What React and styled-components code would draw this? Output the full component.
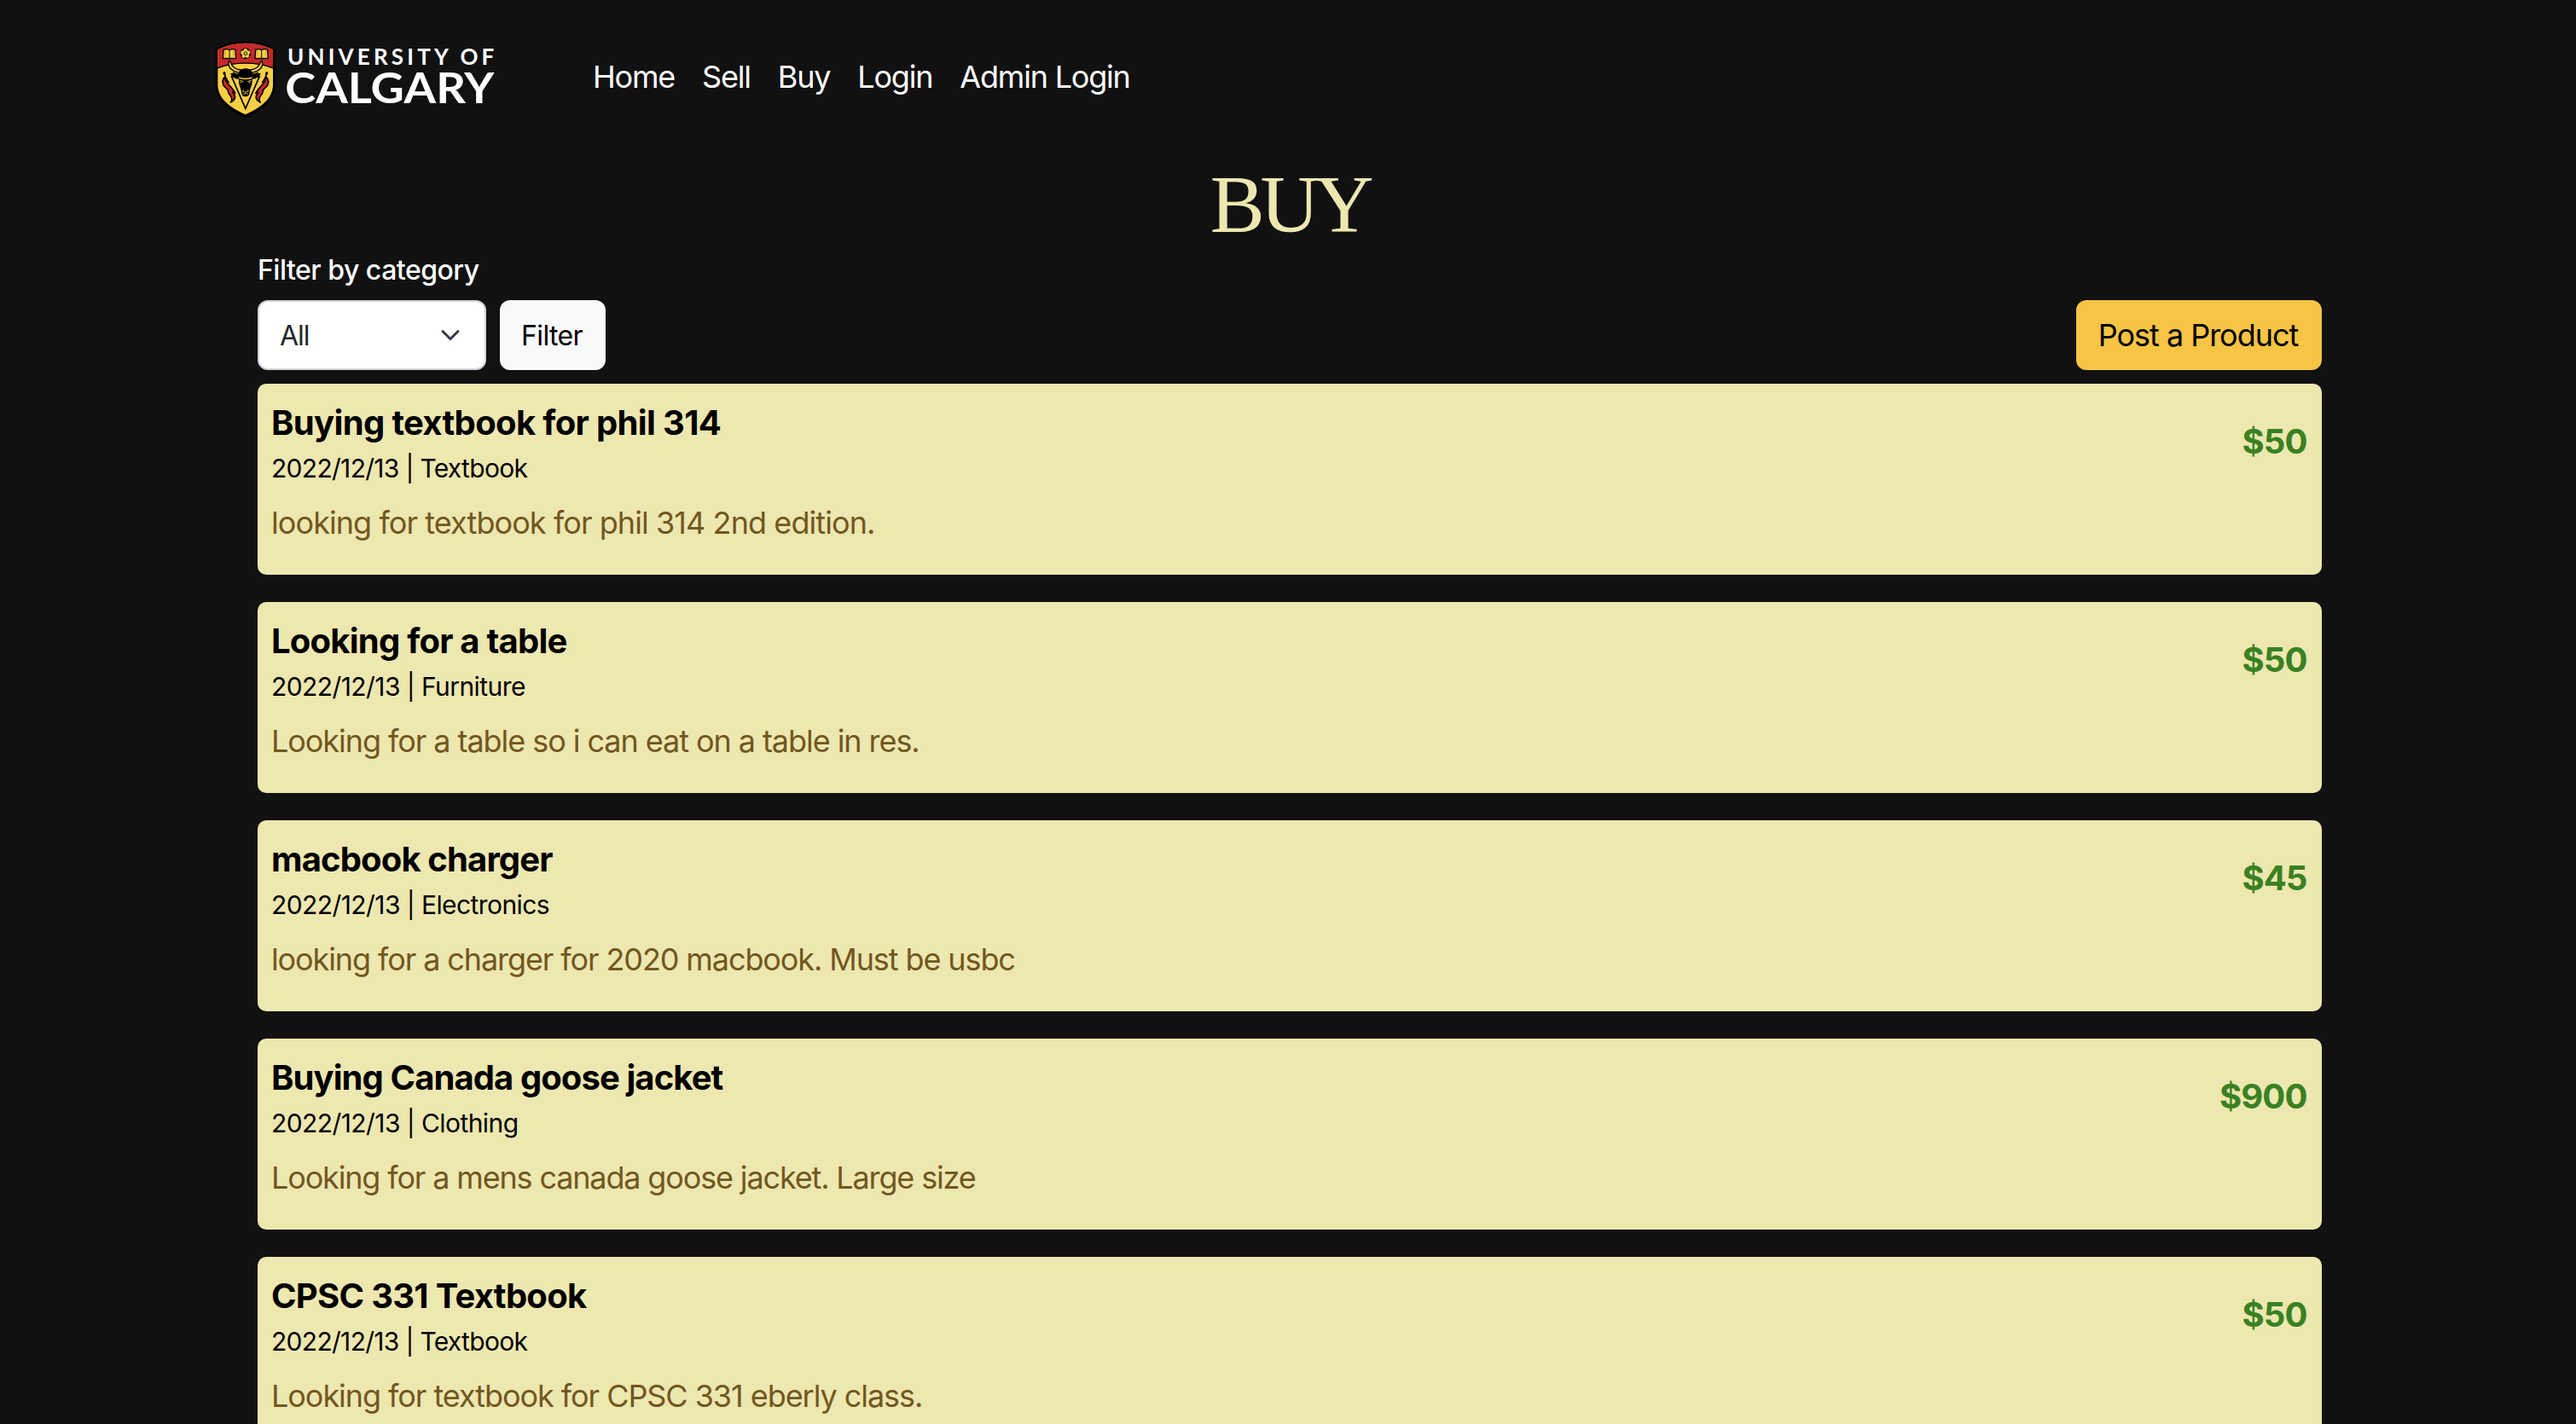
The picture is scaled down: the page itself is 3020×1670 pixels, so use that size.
import React from "react";
import styled, { createGlobalStyle } from "styled-components";

const GlobalStyle = createGlobalStyle`
  * { box-sizing: border-box; }
  body {
    margin: 0;
    background: #111111;
    font-family: Inter, "Liberation Sans", sans-serif;
  }
`;

const Page = styled.div`
  height: 1670px;
  overflow: hidden;
`;

const Header = styled.header`
  display: flex;
  align-items: center;
  gap: 110px;
  height: 180px;
  padding-left: 245px;
`;

const LogoArt = styled.svg`
  display: block;
  width: 340px;
  height: 100px;
`;

const Wordmark = styled.text`
  font-family: Lato, sans-serif;
  font-weight: 700;
  font-size: ${(p) => p.$size}px;
  fill: #ffffff;
`;

const Nav = styled.nav`
  display: flex;
  gap: 32px;
  padding-bottom: 1px;
`;

const NavLink = styled.a`
  font-size: 36px;
  line-height: 54px;
  letter-spacing: -1.2px;
  color: #ffffff;
  white-space: nowrap;
`;

const Main = styled.main`
  width: 2420px;
  margin: 8px 0 0 302px;
`;

const Title = styled.h1`
  margin: 0;
  font-family: "Liberation Serif", serif;
  font-weight: 400;
  font-size: 96px;
  line-height: 104px;
  letter-spacing: -5.4px;
  text-align: center;
  color: #ede7b0;
`;

const FilterLabel = styled.label`
  display: block;
  margin-bottom: 10px;
  font-size: 32px;
  font-weight: 500;
  line-height: 50px;
  letter-spacing: -0.5px;
  color: #ffffff;
`;

const Toolbar = styled.div`
  display: flex;
  gap: 16px;
  height: 82px;
  margin-bottom: 16px;
`;

const Select = styled.div`
  display: flex;
  align-items: center;
  justify-content: space-between;
  width: 268px;
  padding: 0 28px 0 24px;
  border: 2px solid #ced4da;
  border-radius: 12px;
  background: #ffffff;
  color: #212529;
  font-size: 32px;
  letter-spacing: -1px;
`;

const Chevron = styled.svg`
  width: 24px;
  height: 24px;
`;

const Button = styled.button`
  margin: 0 0 0 ${(p) => (p.$end ? "auto" : "0")};
  width: ${(p) => p.$width}px;
  padding: 0 2px 0 0;
  border: 0;
  border-radius: 12px;
  background: ${(p) => p.$bg};
  color: #000000;
  font-family: inherit;
  font-size: ${(p) => p.$size}px;
  letter-spacing: ${(p) => p.$track}px;
  white-space: nowrap;
`;

const List = styled.div`
  display: flex;
  flex-direction: column;
  gap: 32px;
`;

const Card = styled.article`
  display: flex;
  justify-content: space-between;
  height: 224px;
  padding: 22px 17.5px 0 16px;
  border-radius: 10px;
  background: #ede7b0;
  white-space: nowrap;
`;

const CardTitle = styled.h2`
  margin: 0 0 6px;
  font-size: 40px;
  font-weight: 700;
  line-height: 48px;
  letter-spacing: ${(p) => p.$track}px;
  color: #000000;
`;

const Meta = styled.p`
  margin: 0 0 14px;
  font-size: 30px;
  line-height: 46px;
  letter-spacing: ${(p) => p.$track}px;
  color: #000000;
`;

const Description = styled.p`
  margin: 0;
  font-size: 36px;
  line-height: 54px;
  letter-spacing: ${(p) => p.$track}px;
  color: #72571f;
`;

const Price = styled.strong`
  margin-top: 22px;
  font-size: 40px;
  font-weight: 700;
  line-height: 48px;
  letter-spacing: -0.9px;
  color: #398122;
`;

const Feather = () => (
  <g>
    <path
      d="M56 150 C46 160 47 171 51 180 C56 190 68 192 68 203 C68 211 75 214 78 221 C82 229 81 235 76 240 C88 234 93 226 91 217 C89 211 84 210 84 203 C88 204 90 206 92 208 C90 200 83 193 76 185 C67 175 56 166 56 150 Z"
      fill="#c6282b"
      stroke="#000"
      strokeWidth="5"
      strokeLinejoin="round"
    />
    <path d="M53 133 L58 151 L70 172" fill="none" stroke="#000" strokeWidth="5" />
    <circle cx="54" cy="138" r="5" fill="#000" />
  </g>
);

const Book = () => (
  <g>
    <path
      d="M51 55 Q62 50 72 56 Q82 50 93 55 L95 86 L75 85 L72 88 L69 85 L49 86 Z"
      fill="#f6cf45"
      stroke="#000"
      strokeWidth="4"
      strokeLinejoin="round"
    />
    <path d="M72 56 V87" stroke="#000" strokeWidth="3" />
    <path d="M57 57 V80 M87 57 V80" stroke="#b98b1e" strokeWidth="2" />
  </g>
);

const HornSide = () => (
  <g>
    <path
      d="M70 95 C66 113 75 129 106 136 L113 126 C94 124 80 114 75 97 Z"
      fill="#f6cf45"
      stroke="#000"
      strokeWidth="4"
      strokeLinejoin="round"
    />
    <path
      d="M74 139 L85 137 L84 132 L93 137 L112 142 L110 157 C98 159 92 157 87 152 L80 154 L82 147 Z"
      fill="#000"
    />
  </g>
);

const mirror = "translate(257 0) scale(-1 1)";

function Logo() {
  return (
    <LogoArt viewBox="0 0 1020 300" role="img" aria-label="University of Calgary">
      <path
        d="M23 50 Q70 24 128 24 Q186 24 233 50 V178 C233 234 184 270 128 294 C72 270 23 234 23 178 Z"
        fill="#000"
      />
      <path
        d="M31 55 Q74 32 128 32 Q182 32 225 55 V178 C225 228 180 260 128 283 C76 260 31 228 31 178 Z"
        fill="#f6cf45"
      />
      <path d="M31 55 Q74 32 128 32 Q182 32 225 55 V119 Q182 101 128 101 Q74 101 31 119 Z" fill="#c6282b" />
      <path d="M29 120 Q74 102 128 102 Q182 102 227 120" fill="none" stroke="#000" strokeWidth="5" />
      <Book />
      <g transform={mirror}>
        <Book />
      </g>
      <circle cx="128.5" cy="68" r="19" fill="#000" />
      {[0, 72, 144, 216, 288].map((a) => (
        <circle key={a} cx="128.5" cy="57.5" r="6.8" fill="#f6cf45" transform={`rotate(${a} 128.5 68)`} />
      ))}
      <circle cx="128.5" cy="68" r="6.5" fill="#000" />
      <circle cx="128.5" cy="68" r="4" fill="#f6cf45" />
      <path d="M78 146 L128.5 262 L179 146" fill="none" stroke="#000" strokeWidth="5" />
      <Feather />
      <g transform={mirror}>
        <Feather />
      </g>
      <HornSide />
      <g transform={mirror}>
        <HornSide />
      </g>
      <path
        d="M106 134 Q112 121 128.5 121 Q145 121 151 134 L155 146 L152 166 C152 182 144 192 143 204 C143 214 138 220 128.5 220 C119 220 114 214 114 204 C113 192 105 182 105 166 L102 146 Z"
        fill="#000"
      />
      <path d="M105 151 Q128.5 159 152 151 L151 156 Q128.5 163 106 156 Z" fill="#f6cf45" />
      <path
        d="M107 162 L120 166 Q118 171 110 169 M150 162 L137 166 Q139 171 147 169"
        fill="none"
        stroke="#f6cf45"
        strokeWidth="2.5"
      />
      <path
        d="M122 196 Q117 197 119 202 Q123 205 126 201 M135 196 Q140 197 138 202 Q134 205 131 201 M128.5 201 V209 M119 211 Q128.5 206 138 211"
        fill="none"
        stroke="#f6cf45"
        strokeWidth="2.5"
      />
      <Wordmark $size={78} x="276" y="108" textLength="727" lengthAdjust="spacing">
        UNIVERSITY OF
      </Wordmark>
      <Wordmark $size={150} x="268" y="243" textLength="735" lengthAdjust="spacingAndGlyphs">
        CALGARY
      </Wordmark>
    </LogoArt>
  );
}

const links = ["Home", "Sell", "Buy", "Login", "Admin Login"];

const products = [
  {
    title: "Buying textbook for phil 314",
    meta: "2022/12/13 | Textbook",
    text: "looking for textbook for phil 314 2nd edition.",
    price: "$50",
    track: [-0.65, -0.7, -0.92],
  },
  {
    title: "Looking for a table",
    meta: "2022/12/13 | Furniture",
    text: "Looking for a table so i can eat on a table in res.",
    price: "$50",
    track: [-0.78, -0.58, -1.06],
  },
  {
    title: "macbook charger",
    meta: "2022/12/13 | Electronics",
    text: "looking for a charger for 2020 macbook. Must be usbc",
    price: "$45",
    track: [-0.86, -0.58, -1.1],
  },
  {
    title: "Buying Canada goose jacket",
    meta: "2022/12/13 | Clothing",
    text: "Looking for a mens canada goose jacket. Large size",
    price: "$900",
    track: [-0.92, -0.58, -1.15],
  },
  {
    title: "CPSC 331 Textbook",
    meta: "2022/12/13 | Textbook",
    text: "Looking for textbook for CPSC 331 eberly class.",
    price: "$50",
    track: [-0.72, -0.7, -1.05],
  },
];

export default function App() {
  return (
    <Page>
      <GlobalStyle />
      <Header>
        <Logo />
        <Nav>
          {links.map((l) => (
            <NavLink key={l}>{l}</NavLink>
          ))}
        </Nav>
      </Header>
      <Main>
        <Title>BUY</Title>
        <FilterLabel>Filter by category</FilterLabel>
        <Toolbar>
          <Select>
            All
            <Chevron viewBox="0 0 16 16">
              <path
                d="m2 5 6 6 6-6"
                fill="none"
                stroke="#343a40"
                strokeWidth="2"
                strokeLinecap="round"
                strokeLinejoin="round"
              />
            </Chevron>
          </Select>
          <Button $width={124} $bg="#f8f9fb" $size={32} $track={-0.65}>
            Filter
          </Button>
          <Button $end $width={288} $bg="#f7c444" $size={36} $track={-1.03}>
            Post a Product
          </Button>
        </Toolbar>
        <List>
          {products.map((p) => (
            <Card key={p.title}>
              <div>
                <CardTitle $track={p.track[0]}>{p.title}</CardTitle>
                <Meta $track={p.track[1]}>{p.meta}</Meta>
                <Description $track={p.track[2]}>{p.text}</Description>
              </div>
              <Price>{p.price}</Price>
            </Card>
          ))}
        </List>
      </Main>
    </Page>
  );
}
